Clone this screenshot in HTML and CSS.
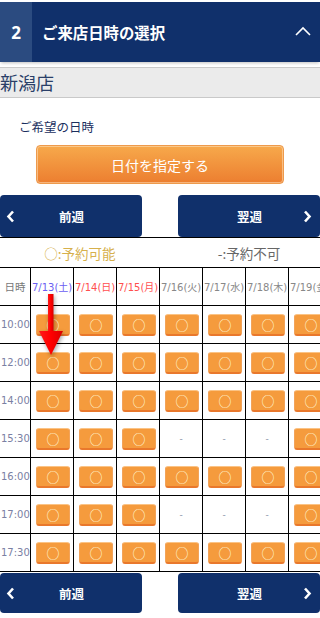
FILE: index.html
```html
<!DOCTYPE html>
<html lang="ja">
<head>
<meta charset="utf-8">
<title>ご来店日時の選択</title>
<link rel="stylesheet" href="styles.css">
</head>
<body>
<div class="page">
  <header class="step-head">
    <div class="step-num">2</div>
    <h2 class="step-title">ご来店日時の選択</h2>
    <svg class="step-toggle" width="16" height="10" viewBox="0 0 16 10"><polyline points="1,9 8,2 15,9" fill="none" stroke="#fff" stroke-width="1.6"/></svg>
  </header>
  <div class="store">新潟店</div>
  <p class="label">ご希望の日時</p>
  <button class="date-btn">日付を指定する</button>
  <nav class="week-nav">
    <button class="week-btn"><svg class="chev" width="9" height="13" viewBox="0 0 9 13"><polyline points="7,1.5 2.5,6.5 7,11.5" fill="none" stroke="#fff" stroke-width="2.6"/></svg><span class="week-text">前週</span><span></span></button>
    <button class="week-btn"><span></span><span class="week-text">翌週</span><svg class="chev" width="9" height="13" viewBox="0 0 9 13"><polyline points="2,1.5 6.5,6.5 2,11.5" fill="none" stroke="#fff" stroke-width="2.6"/></svg></button>
  </nav>
  <div class="legend"><span class="legend-ok">○:予約可能</span><span class="legend-ng">-:予約不可</span></div>
  <div class="schedule-wrap">
    <div class="schedule">
      <div class="cell head-time">日時</div>
      <div class="cell date sat">7/13(土)</div>
      <div class="cell date sun">7/14(日)</div>
      <div class="cell date sun">7/15(月)</div>
      <div class="cell date">7/16(火)</div>
      <div class="cell date">7/17(水)</div>
      <div class="cell date">7/18(木)</div>
      <div class="cell date">7/19(金)</div>

      <div class="cell time">10:00</div>
      <div class="cell"><span class="slot">○</span></div><div class="cell"><span class="slot">○</span></div><div class="cell"><span class="slot">○</span></div><div class="cell"><span class="slot">○</span></div><div class="cell"><span class="slot">○</span></div><div class="cell"><span class="slot">○</span></div><div class="cell"><span class="slot">○</span></div>

      <div class="cell time">12:00</div>
      <div class="cell"><span class="slot">○</span></div><div class="cell"><span class="slot">○</span></div><div class="cell"><span class="slot">○</span></div><div class="cell"><span class="slot">○</span></div><div class="cell"><span class="slot">○</span></div><div class="cell"><span class="slot">○</span></div><div class="cell"><span class="slot">○</span></div>

      <div class="cell time">14:00</div>
      <div class="cell"><span class="slot">○</span></div><div class="cell"><span class="slot">○</span></div><div class="cell"><span class="slot">○</span></div><div class="cell"><span class="slot">○</span></div><div class="cell"><span class="slot">○</span></div><div class="cell"><span class="slot">○</span></div><div class="cell"><span class="slot">○</span></div>

      <div class="cell time">15:30</div>
      <div class="cell"><span class="slot">○</span></div><div class="cell"><span class="slot">○</span></div><div class="cell"><span class="slot">○</span></div><div class="cell na">-</div><div class="cell na">-</div><div class="cell na">-</div><div class="cell"><span class="slot">○</span></div>

      <div class="cell time">16:00</div>
      <div class="cell"><span class="slot">○</span></div><div class="cell"><span class="slot">○</span></div><div class="cell"><span class="slot">○</span></div><div class="cell"><span class="slot">○</span></div><div class="cell"><span class="slot">○</span></div><div class="cell"><span class="slot">○</span></div><div class="cell"><span class="slot">○</span></div>

      <div class="cell time">17:00</div>
      <div class="cell"><span class="slot">○</span></div><div class="cell"><span class="slot">○</span></div><div class="cell"><span class="slot">○</span></div><div class="cell na">-</div><div class="cell na">-</div><div class="cell na">-</div><div class="cell"><span class="slot">○</span></div>

      <div class="cell time">17:30</div>
      <div class="cell"><span class="slot">○</span></div><div class="cell"><span class="slot">○</span></div><div class="cell"><span class="slot">○</span></div><div class="cell"><span class="slot">○</span></div><div class="cell"><span class="slot">○</span></div><div class="cell"><span class="slot">○</span></div><div class="cell"><span class="slot">○</span></div>
    </div>
    <svg class="pointer" width="28" height="66" viewBox="0 0 28 66">
      <defs><linearGradient id="rg" x1="0" x2="1"><stop offset="0" stop-color="#ff1a1a"/><stop offset="0.5" stop-color="#ff0000"/><stop offset="1" stop-color="#d90000"/></linearGradient></defs>
      <rect x="10" y="1" width="5.5" height="39" fill="url(#rg)"/>
      <polygon points="1,38 25,38 13,62" fill="url(#rg)"/>
    </svg>
  </div>
  <nav class="week-nav bottom">
    <button class="week-btn"><svg class="chev" width="9" height="13" viewBox="0 0 9 13"><polyline points="7,1.5 2.5,6.5 7,11.5" fill="none" stroke="#fff" stroke-width="2.6"/></svg><span class="week-text">前週</span><span></span></button>
    <button class="week-btn"><span></span><span class="week-text">翌週</span><svg class="chev" width="9" height="13" viewBox="0 0 9 13"><polyline points="2,1.5 6.5,6.5 2,11.5" fill="none" stroke="#fff" stroke-width="2.6"/></svg></button>
  </nav>
</div>
</body>
</html>
```
FILE: styles.css
```css
* { box-sizing: border-box; }
html, body { margin: 0; padding: 0; background: #fff; }
body {
  width: 320px;
  overflow: hidden;
  font-family: "Noto Sans CJK JP", "Noto Sans", sans-serif;
}
.page { width: 320px; overflow: hidden; }

.step-head {
  margin-top: 2px;
  height: 60px;
  display: flex;
  align-items: center;
  background: #10306b;
  box-shadow: 0 2px 3px -1px rgba(0,0,0,0.25);
  color: #fff;
}
.step-num {
  width: 32px;
  height: 60px;
  background: #2b4b80;
  display: flex;
  align-items: center;
  justify-content: center;
  font-family: "Noto Sans", sans-serif;
  font-weight: 700;
  font-size: 17px;
}
.step-title {
  flex: 1;
  margin: 0 0 0 10px;
  font-size: 15.4px;
  font-weight: 700;
  letter-spacing: 0;
}
.step-toggle { margin-right: 9px; margin-top: -2px; }

.store {
  margin-top: 5px;
  height: 31px;
  background: #ebebeb;
  border-top: 1px solid #c9c9c9;
  border-bottom: 1px solid #c9c9c9;
  color: #2a3f68;
  font-size: 18px;
  line-height: 28px;
  padding-left: 0;
}
.label {
  margin: 20px 0 0 19px;
  font-size: 12.5px;
  line-height: 17px;
  color: #1b2f5e;
}
.date-btn {
  display: block;
  margin: 10px 0 0 36px;
  width: 248px;
  height: 39px;
  border: 1px solid #ee9a4c;
  border-radius: 4px;
  background: linear-gradient(#f7a94b, #ec7e30);
  box-shadow: inset 0 0 0 1px rgba(255,225,190,0.55);
  color: #fff;
  font-family: "Noto Sans CJK JP", sans-serif;
  font-size: 14px;
  padding: 0;
}

.week-nav {
  margin-top: 11px;
  display: flex;
  justify-content: space-between;
}
.week-nav.bottom { margin-top: 1px; }
.week-btn {
  width: 142px;
  height: 42px;
  border: none;
  border-radius: 4px;
  background: #10306b;
  color: #fff;
  padding: 0 5px 0 6px;
  display: grid;
  grid-template-columns: 12px 1fr 12px;
  align-items: center;
  font-family: "Noto Sans CJK JP", sans-serif;
  font-weight: 700;
  font-size: 12.5px;
}
.week-nav.bottom .week-btn { height: 40px; }
.week-text { text-align: center; }

.legend {
  border-top: 1px solid #000;
  height: 30px;
  display: grid;
  grid-template-columns: 160px 160px;
  align-items: center;
  font-size: 13.5px;
}
.legend-ok { color: #d6b04c; text-align: center; }
.legend-ng { color: #666; text-align: center; padding-left: 18px; }

.schedule-wrap {
  position: relative;
  width: 320px;
  overflow: hidden;
}
.schedule {
  width: 331px;
  display: grid;
  grid-template-columns: 30px repeat(7, 42px);
  grid-auto-rows: 37px;
  gap: 1px;
  background: #000;
  border-top: 1px solid #000;
  border-bottom: 1px solid #000;
}
.cell {
  background: #fff;
  display: flex;
  align-items: center;
  justify-content: center;
  font-family: "DejaVu Sans", "Noto Sans CJK JP", sans-serif;
  font-size: 10px;
  white-space: nowrap;
  overflow: visible;
}
.head-time { color: #777; font-family: "Noto Sans CJK JP", sans-serif; font-size: 10.5px; }
.date { color: #888; justify-content: flex-start; padding-left: 1px; }
.date.sat { color: #6b5ef2; }
.date.sun { color: #ff4f4f; }
.time { color: #7a80a3; justify-content: flex-start; padding-left: 1px; }
.na { color: #8a93a8; font-size: 9px; }
.slot {
  width: 34px;
  height: 22px;
  margin-left: 2px;
  border-radius: 3px;
  background: #f59b3d;
  border: 1px solid #f2a35a;
  border-top-color: #fbc385;
  border-bottom: 2px solid #e9782c;
  display: flex;
  align-items: center;
  justify-content: center;
  color: #fff7d6;
  font-family: "Noto Sans CJK JP", sans-serif;
  font-size: 13px;
  line-height: 1;
}
.pointer {
  position: absolute;
  left: 38px;
  top: 26px;
  filter: drop-shadow(1px 2px 2px rgba(0,0,0,0.35));
}
```
